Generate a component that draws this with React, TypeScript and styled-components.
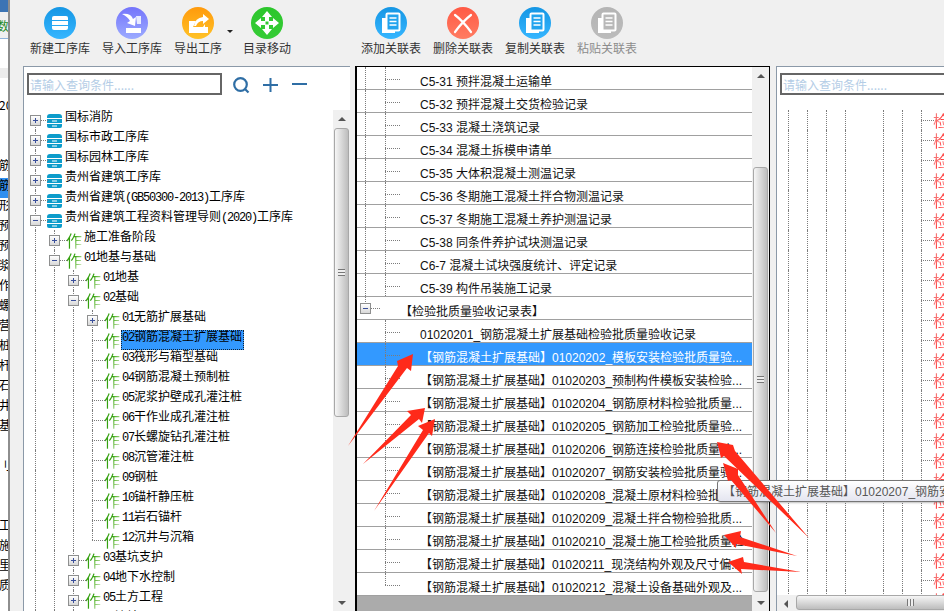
import React from "react";
import styled, {createGlobalStyle, css} from "styled-components";

const CJK = `"Noto Sans CJK SC", "Liberation Sans", sans-serif`;
const UI_FONT = `"Liberation Sans", "Noto Sans CJK SC", sans-serif`;

type LineKind = "full" | "top" | "bottom";

type TreeNode = {
  label: string;
  level: number;
  open?: boolean;
  leaf?: boolean;
  db?: boolean;
  selected?: boolean;
  last?: boolean;
  lines: number[];
};

const l0 = (label: string, open = false): TreeNode => ({label, level: 0, open, db: true, lines: []});
const l1 = (label: string, open = false): TreeNode => ({label, level: 1, open, lines: [0]});
const l2 = (label: string, open = false): TreeNode => ({label, level: 2, open, lines: [0, 1]});
const l3 = (label: string, extra: Partial<TreeNode> = {}): TreeNode => ({label, level: 3, leaf: true, lines: [0, 1, 2], ...extra});

const TREE: TreeNode[] = [
  l0("国标消防"),
  l0("国标市政工序库"),
  l0("国标园林工序库"),
  l0("贵州省建筑工序库"),
  l0("贵州省建筑(GB50300-2013)工序库"),
  l0("贵州省建筑工程资料管理导则(2020)工序库", true),
  l1("施工准备阶段"),
  l1("01地基与基础", true),
  l2("01地基"),
  l2("02基础", true),
  l3("01无筋扩展基础", {leaf: false}),
  l3("02钢筋混凝土扩展基础", {selected: true}),
  l3("03筏形与箱型基础"),
  l3("04钢筋混凝土预制桩"),
  l3("05泥浆护壁成孔灌注桩"),
  l3("06干作业成孔灌注桩"),
  l3("07长螺旋钻孔灌注桩"),
  l3("08沉管灌注桩"),
  l3("09钢桩"),
  l3("10锚杆静压桩"),
  l3("11岩石锚杆"),
  l3("12沉井与沉箱", {last: true}),
  l2("03基坑支护"),
  l2("04地下水控制"),
  l2("05土方工程"),
  l2("06边坡"),
];

const FORMS = [
  "C5-31 预拌混凝土运输单",
  "C5-32 预拌混凝土交货检验记录",
  "C5-33 混凝土浇筑记录",
  "C5-34 混凝土拆模申请单",
  "C5-35 大体积混凝土测温记录",
  "C5-36 冬期施工混凝土拌合物测温记录",
  "C5-37 冬期施工混凝土养护测温记录",
  "C5-38 同条件养护试块测温记录",
  "C6-7 混凝土试块强度统计、评定记录",
  "C5-39 构件吊装施工记录",
];

const P = "【钢筋混凝土扩展基础】";
const BATCHES = [
  "01020201_钢筋混凝土扩展基础检验批质量验收记录",
  P + "01020202_模板安装检验批质量验...",
  P + "01020203_预制构件模板安装检验...",
  P + "01020204_钢筋原材料检验批质量...",
  P + "01020205_钢筋加工检验批质量验...",
  P + "01020206_钢筋连接检验批质量验...",
  P + "01020207_钢筋安装检验批质量验...",
  P + "01020208_混凝土原材料检验批质...",
  P + "01020209_混凝土拌合物检验批质...",
  P + "01020210_混凝土施工检验批质量验...",
  P + "01020211_现浇结构外观及尺寸偏...",
  P + "01020212_混凝土设备基础外观及...",
];

const STRIP = [
  "20", "", "", "筋", "筋", "形", "预", "预", "浆", "作", "螺", "营", "桩", "杆", "石", "井", "基", "", "刂", "", "", "工", "施", "里", "质",
];

const ARROWS = [
  "348,446 398,366 397,361 413,354 411,371 407,368",
  "363,464 411,415 407,411 425,408 422,423 419,419",
  "374,511 423,430 418,426 435,419 432,436 429,433",
  "809,538 735,451 733,445 717,442 721,458 724,456",
  "776,533 738,475 738,469 723,463 728,481 731,480",
  "797,556 740,537 741,531 724,535 736,548 736,544",
  "801,572 744,562 743,557 728,562 742,574 741,569",
];

const GlobalStyle = createGlobalStyle`
  html, body {
    margin: 0;
    padding: 0;
    overflow: hidden;
    background: #f0f0f0;
  }
  * {
    box-sizing: border-box;
  }
`;

const Page = styled.div`
  position: relative;
  display: flex;
  width: 944px;
  height: 611px;
  overflow: hidden;
  font-family: ${CJK};
  font-size: 12px;
  color: #000;
`;

/* window behind, only a sliver is visible */
const BackStrip = styled.div`
  flex: none;
  width: 8px;
  overflow: hidden;
  background: #fff;
`;
const BackHeader = styled.div`
  height: 98px;
  display: flex;
  flex-direction: column;
`;
const BackTitle = styled.div`
  height: 12px;
  background: #3c74b4;
`;
const BackTab = styled.div`
  height: 27px;
  padding-top: 7px;
  line-height: 14px;
  color: #1f8a2a;
  background: #f0f0f0;
  border-bottom: 1px solid #8fb4dc;
  text-indent: -3px;
`;
const BackBand = styled.div`
  height: 10px;
  margin-top: 29px;
  background: #ececec;
`;
const BackRow = styled.div<{$active?: boolean}>`
  height: 20px;
  line-height: 13px;
  white-space: nowrap;
  text-indent: -1px;
  ${(p) => p.$active && css`background: #2f8ff0;`}
`;

const Main = styled.div`
  flex: 1;
  min-width: 0;
  display: flex;
  flex-direction: column;
  background: #f0f0f0;
  border-left: 2px solid #8e8e8e;
`;

const Toolbar = styled.div`
  flex: none;
  height: 66px;
  display: flex;
  padding-left: 14px;
`;
const ToolButton = styled.div<{$width?: number; $gap?: number; $off?: boolean}>`
  flex: none;
  width: ${(p) => p.$width ?? 72}px;
  margin-left: ${(p) => p.$gap ?? 0}px;
  display: flex;
  flex-direction: column;
  align-items: center;
  padding-top: 7px;
  color: ${(p) => (p.$off ? "#8c8c8c" : "#333")};
  white-space: nowrap;
`;
const ToolLabel = styled.span`
  margin-top: 1px;
  line-height: 16px;
  font-size: 12px;
`;
const ToolCircle = styled.span<{$from: string; $to: string}>`
  width: 32px;
  height: 32px;
  border-radius: 50%;
  display: flex;
  align-items: center;
  justify-content: center;
  background: linear-gradient(${(p) => p.$from}, ${(p) => p.$to});
`;
const DropCaret = styled.span`
  flex: none;
  width: 6px;
  height: 3px;
  margin: 30px -2px 0 -1px;
  border-top: 3px solid #222;
  border-left: 3px solid transparent;
  border-right: 3px solid transparent;
`;

const Panels = styled.div`
  flex: 1;
  min-height: 0;
  display: flex;
  padding-left: 13px;
`;
const TreePanel = styled.div`
  flex: none;
  width: 327px;
  display: flex;
  flex-direction: column;
  background: #fff;
  border-top: 1px solid #8b99a8;
  border-left: 1px solid #8b99a8;
`;
const SearchBar = styled.div`
  flex: none;
  height: 43px;
  display: flex;
  align-items: flex-start;
  padding: 6px 0 0 3px;
`;
const SearchInput = styled.input<{$wide?: boolean}>`
  width: ${(p) => (p.$wide ? 200 : 195)}px;
  height: 22px;
  flex: none;
  padding: 0 0 0 1px;
  border: 2px solid #666;
  background: #fff;
  outline: none;
  font-family: ${CJK};
  font-size: 12px;
  &::placeholder {
    color: #b4cde6;
    opacity: 1;
  }
`;
const SearchTools = styled.div`
  display: flex;
  align-items: center;
  gap: 8px;
  margin: 1px 0 0 10px;
  height: 22px;
`;
const TreeBody = styled.div`
  flex: 1;
  min-height: 0;
  display: flex;
`;
const TreeList = styled.div`
  flex: 1;
  min-width: 0;
  overflow: hidden;
  padding-left: 2px;
`;
const TreeRow = styled.div`
  display: flex;
  height: 20px;
  white-space: nowrap;
`;
const Col = styled.span<{$w?: number; $line?: LineKind; $branch?: number; $y?: number}>`
  position: relative;
  flex: none;
  width: ${(p) => p.$w ?? 19}px;
  display: flex;
  align-items: center;
  justify-content: center;
  ${(p) => {
    const x = Math.floor((p.$w ?? 19) / 2);
    const y = p.$y ?? 10;
    return css`
      ${p.$line &&
      css`
        &::before {
          content: "";
          position: absolute;
          left: ${x}px;
          top: ${p.$line === "bottom" ? y : 0}px;
          ${p.$line === "top" ? `height: ${y}px;` : "bottom: 0;"}
          border-left: 1px dotted #7c7c7c;
        }
      `}
      ${p.$branch !== undefined &&
      css`
        &::after {
          content: "";
          position: absolute;
          left: ${x}px;
          right: ${p.$branch}px;
          top: ${y}px;
          border-top: 1px dotted #7c7c7c;
        }
      `}
    `;
  }}
`;
const ExpanderBox = styled.span`
  position: relative;
  z-index: 1;
  width: 11px;
  height: 11px;
  border: 1px solid #8e8f8f;
  background: linear-gradient(#fff, #d8d8d8);
  display: flex;
  align-items: center;
  justify-content: center;
`;
const IconCol = styled.span`
  flex: none;
  width: 19px;
  display: flex;
  align-items: center;
  padding-left: 2px;
`;
const WordIcon = styled.span<{$red?: boolean}>`
  display: block;
  width: 16px;
  height: 18px;
  font-size: 16px;
  line-height: 18px;
  font-family: ${CJK};
  font-weight: 400;
  color: transparent;
  background: ${(p) =>
    p.$red
      ? "linear-gradient(115deg, #f87070 30%, #ff3030 50%, #ffc0c0 85%)"
      : "linear-gradient(115deg, #35a010 45%, #6fbf4a 62%, #bce0a8 85%)"};
  -webkit-background-clip: text;
  background-clip: text;
`;
const NodeLabel = styled.span<{$selected?: boolean}>`
  display: block;
  height: 20px;
  padding: 0 2px 0 1px;
  line-height: 11px;
  font-size: 12px;
  ${(p) =>
    p.$selected &&
    css`
      background: #3399ff;
      outline: 1px dotted #123;
      outline-offset: -1px;
    `}
`;
const Ascii = styled.span`
  font-family: "Liberation Mono", monospace;
  font-size: 12px;
  letter-spacing: -1.2px;
`;

const VScroll = styled.div`
  flex: none;
  width: 17px;
  display: flex;
  flex-direction: column;
  background: #f0f0f0;
`;
const ScrollTrack = styled.div`
  flex: 1;
  min-height: 0;
`;
const ScrollThumb = styled.div<{$top: number; $size: number}>`
  margin-top: ${(p) => p.$top}px;
  margin-left: 1px;
  width: 15px;
  height: ${(p) => p.$size}px;
  border: 1px solid #a8a8a8;
  border-radius: 3px;
  background: linear-gradient(90deg, #f6f6f6, #dcdcdc 45%, #bdbdbd);
  display: flex;
  align-items: center;
  justify-content: center;
`;
const Grip = styled.span`
  width: 7px;
  height: 7px;
  background: repeating-linear-gradient(#777 0 1px, #eee 1px 3px);
`;
const ArrowButton = styled.div<{$dir: "up" | "down" | "left"; $size?: number}>`
  flex: none;
  width: 17px;
  height: ${(p) => p.$size ?? 17}px;
  display: flex;
  align-items: center;
  justify-content: center;
  &::before {
    content: "";
    width: 0;
    height: 0;
    ${(p) =>
      p.$dir === "left"
        ? css`
            border-top: 4px solid transparent;
            border-bottom: 4px solid transparent;
            border-right: 4px solid #555;
          `
        : css`
            border-left: 4px solid transparent;
            border-right: 4px solid transparent;
            ${p.$dir === "up" ? "border-bottom: 4px solid #555;" : "border-top: 4px solid #555;"}
          `}
  }
`;

const RecordPanel = styled.div`
  flex: none;
  width: 415px;
  margin-left: 5px;
  display: flex;
  border-top: 1px solid #000;
  border-left: 2px solid #000;
  border-right: 1px solid #000;
`;
const RecordList = styled.div`
  flex: 1;
  min-width: 0;
  background: #ababab;
`;
const RecordRow = styled.div<{$active?: boolean}>`
  display: flex;
  height: 23px;
  border-bottom: 1px solid #a0a0a0;
  background: ${(p) => (p.$active ? "#3399ff" : "#fff")};
  color: ${(p) => (p.$active ? "#fff" : "#111")};
  white-space: nowrap;
`;
const RecordText = styled.span<{$indent?: number}>`
  padding: 8px 0 0 ${(p) => p.$indent ?? 23}px;
  line-height: 14px;
  font-family: ${UI_FONT};
  font-size: 12px;
`;

const FieldPanel = styled.div`
  flex: none;
  width: 170px;
  margin-left: 6px;
  display: flex;
  flex-direction: column;
  background: #fff;
  border-top: 1px solid #8b99a8;
  border-left: 1px solid #8b99a8;
  overflow: hidden;
`;
const FieldTree = styled.div`
  flex: 1;
  min-height: 0;
  overflow: hidden;
  padding-left: 2px;
`;
const HScroll = styled.div`
  flex: none;
  height: 16px;
  display: flex;
  background: #f0f0f0;
`;
const HThumb = styled.div`
  flex: none;
  width: 160px;
  height: 15px;
  margin-left: 2px;
  padding-left: 110px;
  border: 1px solid #a8a8a8;
  border-radius: 3px;
  background: linear-gradient(#f6f6f6, #dcdcdc 45%, #bdbdbd);
  display: flex;
  align-items: center;
`;
const HGrip = styled.span`
  width: 7px;
  height: 7px;
  background: repeating-linear-gradient(90deg, #777 0 1px, #eee 1px 3px);
`;

const Tip = styled.div`
  position: absolute;
  left: 717px;
  top: 480px;
  width: 300px;
  height: 22px;
  padding: 4px 0 0 5px;
  line-height: 15px;
  font-family: ${UI_FONT};
  font-size: 12px;
  color: #575757;
  white-space: nowrap;
  border: 1px solid #767676;
  border-radius: 3px;
  background: linear-gradient(#fff, #e4e5f0);
  box-shadow: 1px 1px 2px rgba(0, 0, 0, 0.25);
`;
const ArrowLayer = styled.svg`
  position: absolute;
  left: 0;
  top: 0;
  pointer-events: none;
`;

function Expander({open}: {open?: boolean}) {
  return (
    <ExpanderBox>
      <svg width="9" height="9" viewBox="0 0 9 9">
        <path d="M2 4.5h5" stroke="#3a4f9a" strokeWidth="1" />
        {!open && <path d="M4.5 2v5" stroke="#3a4f9a" strokeWidth="1" />}
      </svg>
    </ExpanderBox>
  );
}

function DbIcon() {
  return (
    <svg width="15" height="14" viewBox="0 0 15 14" style={{marginTop: 1}}>
      <path d="M0 4V3Q0 0 3 0h9q3 0 3 3v1z" fill="#0c9ccb" />
      <rect y="5" width="15" height="4" fill="#0c9ccb" />
      <path d="M0 10h15v2q0 2-2 2H2q-2 0-2-2z" fill="#0c9ccb" />
      <rect x="5" y="6.5" width="5" height="1" fill="#fff" />
      <rect x="5" y="11.5" width="5" height="1" fill="#fff" />
    </svg>
  );
}

function StackIcon() {
  return (
    <svg width="18" height="16" viewBox="0 0 18 16">
      <path d="M1 5V3Q1 1 3 1h12q2 0 2 2v2z" fill="#fff" />
      <rect x="1" y="6" width="16" height="4" fill="#fff" />
      <path d="M1 11h16v2q0 2-2 2H3q-2 0-2-2z" fill="#fff" />
    </svg>
  );
}
function ImportIcon() {
  return (
    <svg width="24" height="24" viewBox="0 0 24 24">
      <path d="M2 3q9-1 11 5l3-2-1 9-8-3 3-2Q8 6 2 3z" fill="#fff" />
      <path d="M16 5h5v8h-4z" fill="#e8ecff" />
      <rect x="6" y="17" width="15" height="5" fill="#fff" />
    </svg>
  );
}
function ExportIcon() {
  return (
    <svg width="24" height="24" viewBox="0 0 24 24">
      <path d="M3 10h7L7 16h10l2-3v3h3v6H3z" fill="#fff" />
      <path d="M8 15q1-8 9-9V3l6 5-6 5v-3q-5 0-7 5z" fill="#fff" />
    </svg>
  );
}
function MoveIcon() {
  return (
    <svg width="26" height="26" viewBox="0 0 26 26" fill="#fff">
      <path d="M13 1l5 6h-3v4.500h-4V7H8z" />
      <path d="M13 25l5-6h-3v-4.500h-4V19H8z" />
      <path d="M1 13l6-5v3h4.500v4H7v3z" />
      <path d="M25 13l-6-5v3h-4.500v4H19v3z" />
    </svg>
  );
}
function DocsIcon({tint}: {tint: string}) {
  return (
    <svg width="24" height="24" viewBox="0 0 24 24">
      <path d="M3 7h4v13h9v2H3z" fill="#fff" />
      <rect x="7.500" y="2.500" width="13" height="17" rx="1" fill={tint} stroke="#fff" strokeWidth="2" />
      <path d="M10.500 7h7M10.500 10.500h7M10.500 14h7" stroke="#fff" strokeWidth="1.500" />
    </svg>
  );
}
function CrossIcon() {
  return (
    <svg width="24" height="24" viewBox="0 0 24 24" fill="none" stroke="#fff" strokeWidth="2.200" strokeLinecap="round">
      <path d="M4 4Q12 10 20 21" />
      <path d="M20 4Q12 10 4 21" />
    </svg>
  );
}

function SearchTool() {
  return (
    <>
      <svg width="18" height="18" viewBox="0 0 18 18" fill="none" stroke="#2f6ea5" strokeWidth="2.200">
        <circle cx="8.500" cy="8.500" r="6.300" />
        <path d="M13 13l3.500 3.500" />
      </svg>
      <svg width="21" height="18" viewBox="0 0 21 18" stroke="#2f6ea5" strokeWidth="2" style={{marginLeft: 2}}>
        <path d="M3 9h15M10.500 2v14" />
      </svg>
      <svg width="21" height="18" viewBox="0 0 21 18" stroke="#2f6ea5" strokeWidth="2">
        <path d="M3 8h15" />
      </svg>
    </>
  );
}

function MixedLabel({text}: {text: string}) {
  return (
    <>
      {text.split(/([\x00-\x7f]+)/).map((part, i) => (i % 2 ? <Ascii key={i}>{part}</Ascii> : part))}
    </>
  );
}

function TreeItem({node, first}: {node: TreeNode; first: boolean}) {
  const cols = [0, 1, 2].slice(0, node.level);
  return (
    <TreeRow>
      {cols.map((c) => (
        <Col key={c} $line={node.lines.includes(c) ? "full" : undefined} />
      ))}
      <Col $line={first ? "bottom" : node.last ? "top" : "full"} $branch={-3}>
        {!node.leaf && <Expander open={node.open} />}
      </Col>
      <IconCol>{node.db ? <DbIcon /> : <WordIcon>作</WordIcon>}</IconCol>
      <NodeLabel $selected={node.selected}>
        <MixedLabel text={node.label} />
      </NodeLabel>
    </TreeRow>
  );
}

function VerticalBar({top, size, first}: {top: number; size: number; first: number}) {
  return (
    <VScroll>
      <ArrowButton $dir="up" $size={first} />
      <ScrollTrack>
        <ScrollThumb $top={top} $size={size}>
          <Grip />
        </ScrollThumb>
      </ScrollTrack>
      <ArrowButton $dir="down" />
    </VScroll>
  );
}

const FIELD_COLS = [true, true, true, true, false, true, true, true];

export default function App() {
  return (
    <Page>
      <GlobalStyle />
      <BackStrip>
        <BackHeader>
          <BackTitle />
          <BackTab>数</BackTab>
          <BackBand />
        </BackHeader>
        {STRIP.map((s, i) => (
          <BackRow key={i} $active={i === 4}>
            {s}
          </BackRow>
        ))}
      </BackStrip>
      <Main>
        <Toolbar>
          <ToolButton>
            <ToolCircle $from="#1596e4" $to="#36b6ff">
              <StackIcon />
            </ToolCircle>
            <ToolLabel>新建工序库</ToolLabel>
          </ToolButton>
          <ToolButton>
            <ToolCircle $from="#7474fb" $to="#9cabff">
              <ImportIcon />
            </ToolCircle>
            <ToolLabel>导入工序库</ToolLabel>
          </ToolButton>
          <ToolButton $width={60}>
            <ToolCircle $from="#ff9a0c" $to="#ffc227">
              <ExportIcon />
            </ToolCircle>
            <ToolLabel>导出工序</ToolLabel>
          </ToolButton>
          <DropCaret />
          <ToolButton>
            <ToolCircle $from="#2cc62c" $to="#36cc36">
              <MoveIcon />
            </ToolCircle>
            <ToolLabel>目录移动</ToolLabel>
          </ToolButton>
          <ToolButton $gap={52}>
            <ToolCircle $from="#1596e4" $to="#36b6ff">
              <DocsIcon tint="#22a4ee" />
            </ToolCircle>
            <ToolLabel>添加关联表</ToolLabel>
          </ToolButton>
          <ToolButton>
            <ToolCircle $from="#ff5a45" $to="#ff7c62">
              <CrossIcon />
            </ToolCircle>
            <ToolLabel>删除关联表</ToolLabel>
          </ToolButton>
          <ToolButton>
            <ToolCircle $from="#1596e4" $to="#36b6ff">
              <DocsIcon tint="#22a4ee" />
            </ToolCircle>
            <ToolLabel>复制关联表</ToolLabel>
          </ToolButton>
          <ToolButton $off>
            <ToolCircle $from="#b4b4b4" $to="#bcbcbc">
              <DocsIcon tint="#b8b8b8" />
            </ToolCircle>
            <ToolLabel>粘贴关联表</ToolLabel>
          </ToolButton>
        </Toolbar>
        <Panels>
          <TreePanel>
            <SearchBar>
              <SearchInput placeholder="请输入查询条件......" readOnly />
              <SearchTools>
                <SearchTool />
              </SearchTools>
            </SearchBar>
            <TreeBody>
              <TreeList>
                {TREE.map((node, i) => (
                  <TreeItem key={node.label} node={node} first={i === 0} />
                ))}
              </TreeList>
              <VerticalBar first={18} top={0} size={289} />
            </TreeBody>
          </TreePanel>
          <RecordPanel>
            <RecordList>
              {FORMS.map((f) => (
                <RecordRow key={f}>
                  <Col $w={17} $line="full" />
                  <Col $w={23} $line="full" $branch={-3} $y={12} />
                  <RecordText>{f}</RecordText>
                </RecordRow>
              ))}
              <RecordRow>
                <Col $w={17} $line="top" $branch={-6} $y={11}>
                  <Expander open />
                </Col>
                <RecordText $indent={26}>【检验批质量验收记录表】</RecordText>
              </RecordRow>
              {BATCHES.map((b, i) => (
                <RecordRow key={b} $active={i === 1}>
                  <Col $w={17} />
                  <Col $w={23} $line={i === BATCHES.length - 1 ? "top" : "full"} $branch={-3} $y={12} />
                  <RecordText>{b}</RecordText>
                </RecordRow>
              ))}
            </RecordList>
            <VerticalBar first={17} top={83} size={425} />
          </RecordPanel>
          <FieldPanel>
            <SearchBar>
              <SearchInput $wide placeholder="请输入查询条件......" readOnly />
            </SearchBar>
            <FieldTree>
              {Array.from({length: 25}, (_, i) => (
                <TreeRow key={i}>
                  {FIELD_COLS.map((on, c) => (
                    <Col key={c} $line={on ? "full" : undefined} $branch={c === 7 ? -3 : undefined} />
                  ))}
                  <IconCol>
                    <WordIcon $red>检</WordIcon>
                  </IconCol>
                </TreeRow>
              ))}
            </FieldTree>
            <HScroll>
              <ArrowButton $dir="left" />
              <HThumb>
                <HGrip />
              </HThumb>
            </HScroll>
          </FieldPanel>
        </Panels>
      </Main>
      <Tip>【钢筋混凝土扩展基础】01020207_钢筋安装检验批质量验收记录</Tip>
      <ArrowLayer width="944" height="611" viewBox="0 0 944 611">
        {ARROWS.map((pts) => (
          <polygon key={pts} points={pts} fill="#ff2a1a" />
        ))}
      </ArrowLayer>
    </Page>
  );
}
